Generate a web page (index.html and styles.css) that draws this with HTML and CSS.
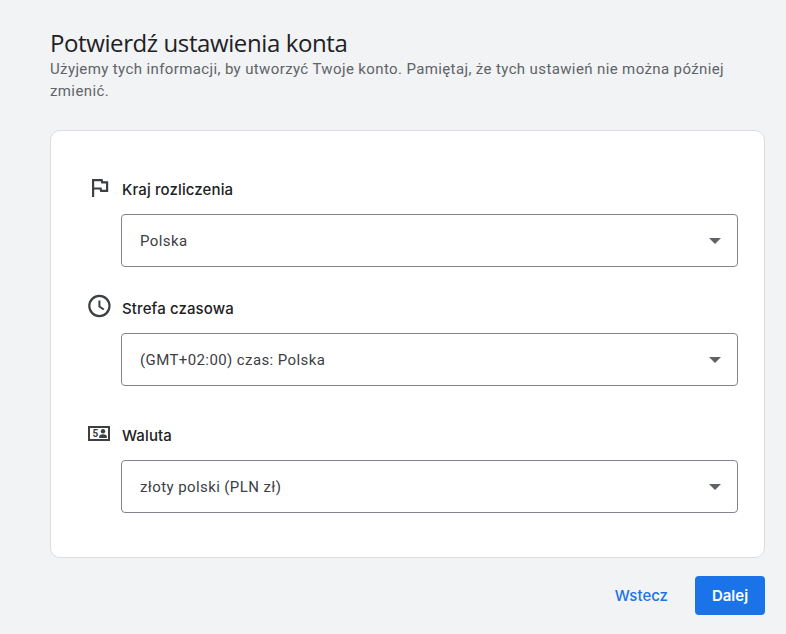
FILE: index.html
```html
<!DOCTYPE html>
<html lang="pl">
<head>
<meta charset="utf-8">
<title>Potwierdź ustawienia konta</title>
<link rel="stylesheet" href="styles.css">
</head>
<body>
<main class="page">
  <h1 class="title">Potwierdź ustawienia konta</h1>
  <p class="desc">Użyjemy tych informacji, by utworzyć Twoje konto. Pamiętaj, że tych ustawień nie można później zmienić.</p>
  <section class="card">
    <div class="field field-country">
      <div class="label">
        <svg class="icon" viewBox="0 0 24 24" width="24" height="24"><path fill="#3c4043" fill-rule="evenodd" d="M4 1h10.6l.5 2.3H20.2v10.6h-8l-.5-2.3H6.2V19H4V1zm2.2 2.2v6.2h7.3l.5 2.3h4V5.5h-4.7l-.5-2.3H6.2z"/></svg>
        <span>Kraj rozliczenia</span>
      </div>
      <div class="select"><span>Polska</span><i class="arrow"></i></div>
    </div>
    <div class="field field-zone">
      <div class="label">
        <svg class="icon" viewBox="0 0 24 24" width="24" height="24"><circle cx="11.4" cy="9" r="10.1" fill="none" stroke="#3c4043" stroke-width="2.2"/><path fill="none" stroke="#3c4043" stroke-width="2" d="M11.4 3.5v6l4.4 3"/></svg>
        <span>Strefa czasowa</span>
      </div>
      <div class="select"><span>(GMT+02:00) czas: Polska</span><i class="arrow"></i></div>
    </div>
    <div class="field field-currency">
      <div class="label">
        <svg class="icon" viewBox="0 0 24 24" width="24" height="24"><rect x="1" y="3" width="20" height="13" fill="none" stroke="#3c4043" stroke-width="2"/><text x="4.4" y="12.8" class="icon-five">5</text><circle cx="15" cy="7.2" r="2.2" fill="#3c4043"/><path fill="#3c4043" d="M11.2 14v-1.7c0-1.4 2.3-2.1 3.8-2.1s3.8.7 3.8 2.1V14z"/></svg>
        <span>Waluta</span>
      </div>
      <div class="select"><span>złoty polski (PLN zł)</span><i class="arrow"></i></div>
    </div>
  </section>
  <footer class="actions">
    <button class="btn-back" type="button">Wstecz</button>
    <button class="btn-next" type="button">Dalej</button>
  </footer>
</main>
</body>
</html>
```
FILE: styles.css
```css
* { box-sizing: border-box; }
html, body { margin: 0; height: 100%; }
body {
  background: #f1f3f4;
  font-family: Roboto, "Liberation Sans", sans-serif;
  overflow: hidden;
}
.page { padding: 28px 21px 0 50px; }
.title {
  margin: 0;
  font: 400 24px/30px "Open Sans", Roboto, sans-serif;
  letter-spacing: -0.4px;
  color: #202124;
}
.desc {
  margin: 0;
  font-size: 15px;
  line-height: 22px;
  letter-spacing: 0.38px;
  color: #5f6368;
}
.card {
  margin-top: 28px;
  height: 428px;
  background: #fff;
  border: 1px solid #dadce0;
  border-radius: 10px;
  padding: 0 26px 0 37px;
}
.field { display: flex; flex-direction: column; }
.field-country { padding-top: 47px; }
.field-zone { padding-top: 30px; }
.field-currency { padding-top: 38px; }
.label {
  display: flex;
  align-items: center;
  height: 24px;
  gap: 10px;
  font: 450 15px/24px Inter, Roboto, sans-serif;
  letter-spacing: 0.12px;
  color: #202124;
}
.icon { display: block; flex: none; overflow: visible; }
.icon-five { font: 700 10px Roboto, sans-serif; fill: #3c4043; }
.select {
  margin: 12px 0 0 33px;
  height: 53px;
  display: flex;
  align-items: center;
  justify-content: space-between;
  padding: 0 16px 0 18px;
  border: 1px solid #80868b;
  border-radius: 4px;
  font-size: 15px;
  letter-spacing: 0.4px;
  color: #3c4043;
}
.arrow {
  width: 0;
  height: 0;
  border-left: 6px solid transparent;
  border-right: 6px solid transparent;
  border-top: 6px solid #5f6368;
}
.actions {
  display: flex;
  justify-content: flex-end;
  align-items: center;
  gap: 10px;
  margin-top: 18px;
}
.btn-back, .btn-next {
  font: 500 15px/20px Inter, Roboto, sans-serif;
  border: 0;
  height: 39px;
  border-radius: 4px;
  cursor: pointer;
}
.btn-back { background: none; color: #1a73e8; padding: 0 17px; }
.btn-next { background: #1a73e8; color: #fff; width: 70px; padding: 0; font-weight: 600; }
```
